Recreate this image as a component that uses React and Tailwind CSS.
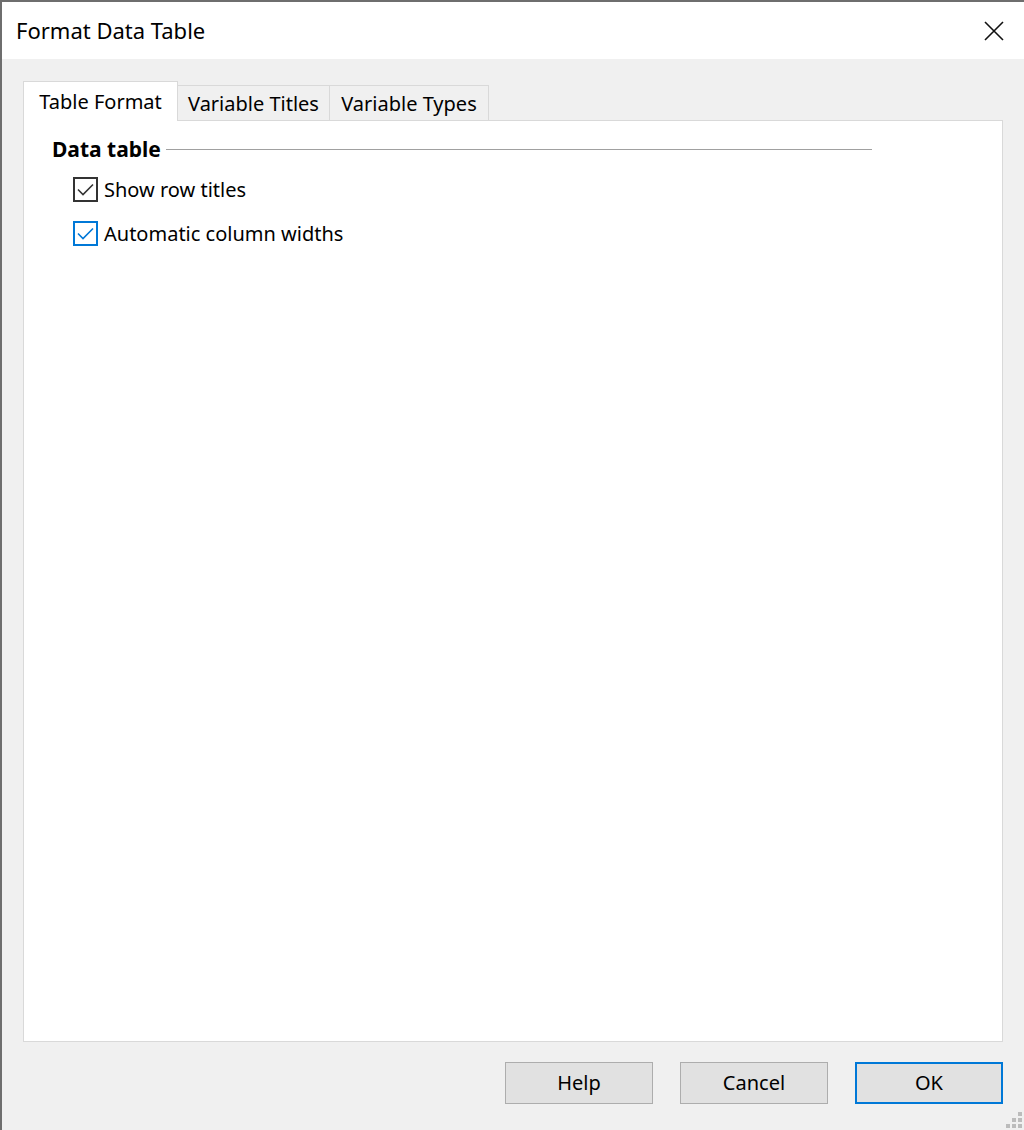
import React from 'react';

const font = { fontFamily: '"Noto Sans", "Open Sans", sans-serif' };

const Check = ({ color }) => (
  <svg viewBox="0 0 25 25" className="h-[25px] w-[25px]">
    <path d="M5 12.5 L10 17.5 L20 7.5" fill="none" stroke={color} strokeWidth="1.6" />
  </svg>
);

const Checkbox = ({ label, focused }) => (
  <div className="flex h-[25px] items-center">
    <div
      className={`box-border h-[25px] w-[25px] border-2 bg-white ${focused ? 'border-[#0078d7]' : 'border-[#333333]'}`}
    >
      <div className="-m-[2px]">
        <Check color={focused ? '#0078d7' : '#333333'} />
      </div>
    </div>
    <span className="ml-[6px] text-[20px] leading-none text-black">{label}</span>
  </div>
);

const Tab = ({ label, active, width }) =>
  active ? (
    <div
      className={`relative z-10 -mb-px flex h-[40px] items-center justify-center border border-b-0 border-[#d9d9d9] bg-white text-[20px] text-black ${width}`}
    >
      {label}
    </div>
  ) : (
    <div
      className={`mt-[4px] flex h-[35px] items-center justify-center border border-l-0 border-b-0 border-[#d9d9d9] bg-[#f0f0f0] pt-[2px] text-[20px] text-black ${width}`}
    >
      {label}
    </div>
  );

const Button = ({ label, primary }) => (
  <button
    className={`box-border h-[42px] w-[148px] bg-[#e1e1e1] text-[20px] text-black ${primary ? 'border-2 border-[#0078d7]' : 'border border-[#adadad]'}`}
  >
    {label}
  </button>
);

export default function App() {
  return (
    <div className="h-[1130px] w-[1024px] overflow-hidden bg-[#6e6e6e] pl-[2px] pt-[2px]" style={font}>
      <div className="flex h-full flex-col bg-[#f0f0f0]">
        <div className="flex h-[57px] items-center justify-between bg-white pl-[14px] pr-[20px]">
          <span className="text-[22px] text-black">Format Data Table</span>
          <svg viewBox="0 0 20 20" className="h-[20px] w-[20px]">
            <path d="M1 1 L19 19 M19 1 L1 19" stroke="#111" strokeWidth="1.6" />
          </svg>
        </div>
        <div className="flex flex-1 flex-col px-[21px] pt-[22px]">
          <div className="flex items-end">
            <Tab label="Table Format" active width="w-[155px]" />
            <Tab label="Variable Titles" width="w-[152px]" />
            <Tab label="Variable Types" width="w-[159px]" />
          </div>
          <div className="h-[922px] border border-[#d9d9d9] bg-white pl-[28px] pt-[14px]">
            <div className="flex items-center pr-[130px]">
              <span className="text-[21px] font-bold leading-[28px] text-black">Data table</span>
              <div className="ml-[5px] h-px flex-1 bg-[#a0a0a0]" />
            </div>
            <div className="mt-[14px] flex flex-col gap-[19px] pl-[21px]">
              <Checkbox label="Show row titles" />
              <Checkbox label="Automatic column widths" focused />
            </div>
          </div>
          <div className="relative flex flex-1 items-start justify-end gap-[27px] pt-[20px]">
            <Button label="Help" />
            <Button label="Cancel" />
            <Button label="OK" primary />
            <div className="absolute bottom-[2px] right-[-19px] grid grid-cols-3 gap-[2px]">
              <span className="h-[4px] w-[4px]" />
              <span className="h-[4px] w-[4px]" />
              <span className="h-[4px] w-[4px] bg-[#bcbcbc]" />
              <span className="h-[4px] w-[4px]" />
              <span className="h-[4px] w-[4px] bg-[#bcbcbc]" />
              <span className="h-[4px] w-[4px] bg-[#bcbcbc]" />
              <span className="h-[4px] w-[4px] bg-[#bcbcbc]" />
              <span className="h-[4px] w-[4px] bg-[#bcbcbc]" />
              <span className="h-[4px] w-[4px] bg-[#bcbcbc]" />
            </div>
          </div>
        </div>
      </div>
    </div>
  );
}
